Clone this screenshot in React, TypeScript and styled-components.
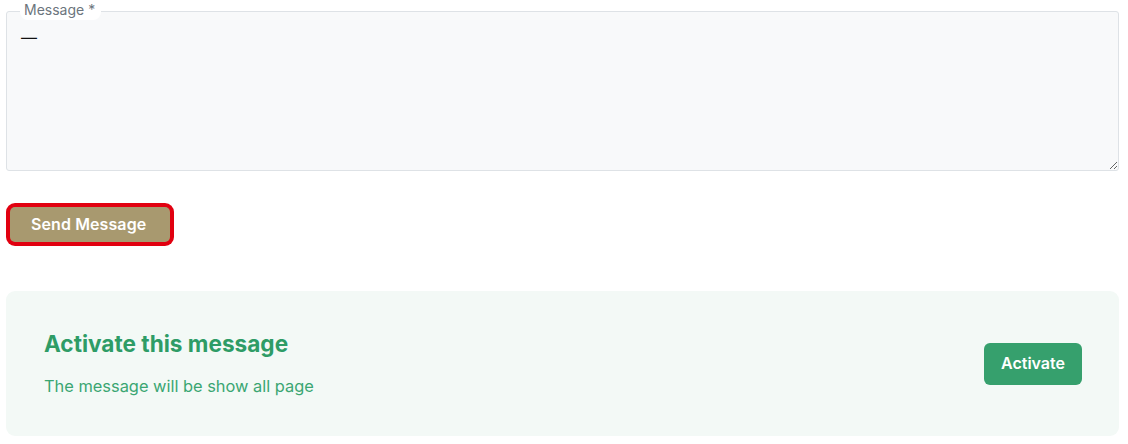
import React from "react";
import styled, { createGlobalStyle } from "styled-components";

const Global = createGlobalStyle`
  html, body { margin: 0; padding: 0; background: #fff; }
  body { font-family: Inter, "Noto Sans", sans-serif; }
  * { box-sizing: border-box; }
`;

const Page = styled.div`
  padding: 11px 9px 0 6px;
  display: flex;
  flex-direction: column;
`;

const Field = styled.div`
  position: relative;
`;

const Legend = styled.label`
  position: absolute;
  left: 14px;
  top: -11px;
  padding: 0 6px 0 4px;
  background: #fff;
  border-radius: 8px;
  font-size: 14px;
  line-height: 20px;
  color: #6c757d;
`;

const TextArea = styled.textarea`
  display: block;
  width: 100%;
  height: 160px;
  padding: 13px 14px;
  border: 1px solid #dee2e6;
  border-radius: 3px;
  background: #f8f9fa;
  font-family: Inter, sans-serif;
  font-size: 16px;
  line-height: 24px;
  color: #111;
  outline: none;
`;

const SendButton = styled.button`
  align-self: flex-start;
  margin: 36px 0 0 4px;
  height: 35px;
  padding: 0 24px 1px 21px;
  border: none;
  border-radius: 5px;
  background: #a8996f;
  color: #fff;
  font-family: Inter, sans-serif;
  font-size: 16px;
  font-weight: 600;
  letter-spacing: 0.1px;
  box-shadow: 0 0 0 4px #e10010;
`;

const Card = styled.div`
  margin-top: 49px;
  height: 145px;
  padding: 0 37px 0 38px;
  border-radius: 9px;
  background: #f3f9f6;
  display: flex;
  align-items: center;
  justify-content: space-between;
`;

const CardText = styled.div`
  display: flex;
  flex-direction: column;
  gap: 16px;
`;

const Heading = styled.h2`
  margin: 0;
  font-size: 22.6px;
  font-weight: 700;
  line-height: 28px;
  color: #2e9c66;
`;

const Sub = styled.p`
  margin: 0;
  font-size: 16.4px;
  line-height: 24px;
  color: #3aa672;
`;

const ActivateButton = styled.button`
  height: 42px;
  padding: 0 17px 2px;
  border: none;
  border-radius: 6px;
  background: #36a06d;
  color: #fff;
  font-family: Inter, sans-serif;
  font-size: 16px;
  font-weight: 600;
`;

export default function App() {
  return (
    <>
      <Global />
      <Page>
        <Field>
          <Legend>Message *</Legend>
          <TextArea defaultValue="—" />
        </Field>
        <SendButton>Send Message</SendButton>
        <Card>
          <CardText>
            <Heading>Activate this message</Heading>
            <Sub>The message will be show all page</Sub>
          </CardText>
          <ActivateButton>Activate</ActivateButton>
        </Card>
      </Page>
    </>
  );
}
